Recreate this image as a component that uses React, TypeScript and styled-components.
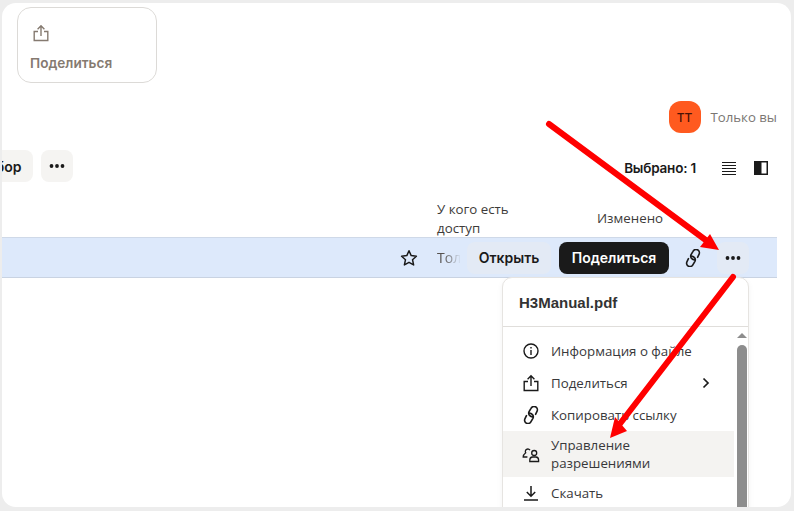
import React from "react";
import styled, { createGlobalStyle } from "styled-components";

const GlobalStyle = createGlobalStyle`
    html, body {
        margin: 0;
        padding: 0;
        background: #ededed;
    }
`;

const Frame = styled.div`
    position: relative;
    box-sizing: border-box;
    width: 794px;
    height: 511px;
    padding: 3px 3px 4px 2px;
    background: #ededed;
    overflow: hidden;
    font-family: "Inter", "Liberation Sans", sans-serif;
    color: #1a1a1a;
`;

const Sheet = styled.div`
    position: relative;
    height: 100%;
    background: #fff;
    border-radius: 14px;
    overflow: hidden;
`;

const ActionCard = styled.div`
    box-sizing: border-box;
    display: flex;
    flex-direction: column;
    width: 140px;
    height: 76px;
    margin: 4px 0 0 15px;
    padding: 16px 12px 0;
    border: 1px solid #dcdad7;
    border-radius: 14px;
    color: #857a70;
`;

const CardIcon = styled.div`
    display: flex;
    margin-left: 2px;
`;

const CardLabel = styled.span`
    margin-top: 13px;
    font-size: 13.6px;
    line-height: 16px;
    font-weight: 600;
`;

const OwnerRow = styled.div`
    display: flex;
    align-items: center;
    justify-content: flex-end;
    gap: 10px;
    height: 32px;
    margin-top: 18px;
    padding-right: 14px;
`;

const Avatar = styled.div`
    display: flex;
    align-items: center;
    justify-content: center;
    width: 32px;
    height: 32px;
    border-radius: 12px;
    background: #ff5a1f;
    color: #4a1206;
    font-size: 12px;
    font-weight: 500;
`;

const OwnerText = styled.span`
    font-family: "Open Sans", "Liberation Sans", sans-serif;
    font-size: 13.2px;
    color: #7a7672;
`;

const Toolbar = styled.div`
    display: flex;
    align-items: center;
    height: 32px;
    margin-top: 17px;
    padding-right: 23px;
`;

const SoftButton = styled.button<{ $dark?: boolean; $w: number; $tint?: string }>`
    display: flex;
    align-items: center;
    justify-content: center;
    flex: none;
    box-sizing: border-box;
    width: ${(p) => p.$w}px;
    height: 32px;
    padding: 0;
    border: none;
    border-radius: 8px;
    background: ${(p) => (p.$dark ? "#1a1a1a" : p.$tint || "#f5f4f2")};
    color: ${(p) => (p.$dark ? "#fff" : "#1a1a1a")};
    font-family: inherit;
    font-size: 14px;
    font-weight: 600;
`;

const ClippedButton = styled(SoftButton)`
    margin-left: -38px;
    margin-right: 8px;
`;

const SelectionGroup = styled.div`
    display: flex;
    align-items: center;
    margin-left: auto;
    padding-top: 4px;
`;

const Selected = styled.span`
    margin-right: 26px;
    font-size: 13.5px;
    font-weight: 600;
    letter-spacing: -0.2px;
`;

const ViewIcons = styled.div`
    display: flex;
    gap: 18px;
`;

const Columns = styled.div`
    box-sizing: border-box;
    display: flex;
    height: 38px;
    margin-top: 17px;
    padding-top: 1px;
    margin-left: 435px;
    font-family: "Open Sans", "Liberation Sans", sans-serif;
    font-size: 13.3px;
    line-height: 19px;
    color: #3d3b39;
`;

const AccessHead = styled.div`
    width: 90px;
    margin-right: 70px;
`;

const ChangedHead = styled.div`
    line-height: 36px;
`;

const FileRow = styled.div`
    box-sizing: border-box;
    display: flex;
    align-items: center;
    width: 775px;
    height: 41px;
    padding-right: 28px;
    background: #dde9fb;
    border-top: 1px solid #cfd9e8;
    border-bottom: 1px solid #c9d3e2;
`;

const StarSlot = styled.div`
    display: flex;
    margin-left: 398px;
    width: 37px;
`;

const Faded = styled.span`
    width: 30px;
    overflow: hidden;
    white-space: nowrap;
    font-family: "Open Sans", "Liberation Sans", sans-serif;
    font-size: 14px;
    color: #55514e;
    mask-image: linear-gradient(to right, #000 20%, transparent 80%);
`;

const ShareButton = styled(SoftButton)`
    margin-left: 8px;
`;

const LinkSlot = styled.div`
    display: flex;
    justify-content: center;
    width: 48px;
`;

const Menu = styled.div`
    position: absolute;
    top: 274px;
    left: 500px;
    width: 247px;
    height: 260px;
    box-sizing: border-box;
    background: #fff;
    border: 1px solid #e6e4e1;
    border-radius: 10px;
    box-shadow: 0 2px 6px rgba(0, 0, 0, 0.05);
`;

const MenuTitle = styled.div`
    box-sizing: border-box;
    height: 49px;
    padding: 15px 16px 0;
    border-bottom: 1px solid #e0dedb;
    font-family: "Liberation Sans", sans-serif;
    font-size: 15px;
    line-height: 20px;
    font-weight: 700;
    color: #333;
`;

const MenuList = styled.div`
    display: flex;
    flex-direction: column;
    width: 231px;
    padding-top: 8px;
`;

const MenuItem = styled.div<{ $active?: boolean }>`
    display: flex;
    align-items: center;
    gap: 11px;
    box-sizing: border-box;
    height: ${(p) => (p.$active ? "46px" : "32px")};
    padding-left: 19px;
    background: ${(p) => (p.$active ? "#f4f3f1" : "transparent")};
    font-family: "Open Sans", "Liberation Sans", sans-serif;
    font-size: 13.3px;
    line-height: 18px;
    color: #38383a;
`;

const ItemLabel = styled.span`
    flex: 1;
`;

const Chevron = styled.svg`
    margin-right: 24px;
`;

const ScrollArrow = styled.div`
    position: absolute;
    top: 55px;
    right: 1px;
    width: 0;
    height: 0;
    border-left: 5px solid transparent;
    border-right: 5px solid transparent;
    border-bottom: 5px solid #8d8d8d;
`;

const ScrollThumb = styled.div`
    position: absolute;
    top: 67px;
    right: 1px;
    width: 10px;
    height: 190px;
    border-radius: 5px 5px 0 0;
    background: #8d8d8d;
`;

const ArrowLayer = styled.svg`
    position: absolute;
    top: 0;
    left: 0;
    pointer-events: none;
`;

const Dots = () => (
    <svg width="16" height="4" viewBox="0 0 16 4" fill="#1a1a1a">
        <circle cx="2.5" cy="2" r="1.9" />
        <circle cx="8" cy="2" r="1.9" />
        <circle cx="13.5" cy="2" r="1.9" />
    </svg>
);

const ShareIcon = ({ color = "#1a1a1a" }: { color?: string }) => (
    <svg width="18" height="18" viewBox="0 0 18 18" fill="none" stroke={color} strokeWidth="1.4">
        <path d="M9 12V2M5.6 5.2 9 1.8l3.4 3.4" />
        <path d="M6 7.5H2.2v9h13.6v-9H12" />
    </svg>
);

const LinkIcon = () => (
    <svg width="18" height="18" viewBox="2 1.5 14 15" fill="none" stroke="#1a1a1a" strokeWidth="1.35" strokeLinecap="round">
        <path d="M10.200 10.600C7.800 10.200 6.400 8.200 7.400 6.200L9 3.400A2.800 2.800 0 0 1 14 6L12.800 8.400" />
        <path d="M7.800 7.400C10.200 7.800 11.600 9.800 10.600 11.800L9 14.600A2.800 2.800 0 0 1 4 12L5.200 9.600" />
    </svg>
);

const InfoIcon = () => (
    <svg width="18" height="18" viewBox="0 0 18 18" fill="none" stroke="#1a1a1a" strokeWidth="1.4">
        <circle cx="9" cy="9" r="7" />
        <path d="M9 8v5M9 5v1.6" />
    </svg>
);

const UsersIcon = () => (
    <svg width="18" height="18" viewBox="0 0 18 18" fill="none" stroke="#1a1a1a" strokeWidth="1.3">
        <path d="M5.400 12H1.200C1.200 10.500 2 9.200 3.700 7.800A2.500 2.500 0 1 1 8 5.200" />
        <circle cx="12.200" cy="8" r="2.500" />
        <path d="M7.800 16.500v-1.500a3 3 0 0 1 2.700-3h3.400a3 3 0 0 1 2.700 3v1.500z" />
    </svg>
);

const DownloadIcon = () => (
    <svg width="18" height="18" viewBox="0 0 18 18" fill="none" stroke="#1a1a1a" strokeWidth="1.5">
        <path d="M9 2v10M4.8 8 9 12.2 13.2 8M2 16h14" />
    </svg>
);

const menuItems = [
    { label: "Информация о файле", icon: <InfoIcon /> },
    { label: "Поделиться", icon: <ShareIcon />, more: true },
    { label: "Копировать ссылку", icon: <LinkIcon /> },
    { label: "Управление разрешениями", icon: <UsersIcon />, active: true },
    { label: "Скачать", icon: <DownloadIcon /> },
];

export default function App() {
    return (
        <Frame>
            <GlobalStyle />
            <Sheet>
                <ActionCard>
                    <CardIcon>
                        <ShareIcon color="#857a70" />
                    </CardIcon>
                    <CardLabel>Поделиться</CardLabel>
                </ActionCard>

                <OwnerRow>
                    <Avatar>ТТ</Avatar>
                    <OwnerText>Только вы</OwnerText>
                </OwnerRow>

                <Toolbar>
                    <ClippedButton $w={69}>Выбор</ClippedButton>
                    <SoftButton $w={32}>
                        <Dots />
                    </SoftButton>
                    <SelectionGroup>
                        <Selected>Выбрано: 1</Selected>
                        <ViewIcons>
                            <svg width="14" height="14" viewBox="0 0 14 14" stroke="#1a1a1a" strokeWidth="1.2">
                                <path d="M0 1.5h14M0 4.5h14M0 7.5h14M0 10.5h14M0 13.5h14" />
                            </svg>
                            <svg width="14" height="14" viewBox="0 0 14 14" fill="none">
                                <rect x="0.75" y="0.75" width="12.5" height="12.5" stroke="#1a1a1a" strokeWidth="1.5" />
                                <rect x="1" y="1" width="6.5" height="12" fill="#1a1a1a" />
                            </svg>
                        </ViewIcons>
                    </SelectionGroup>
                </Toolbar>

                <Columns>
                    <AccessHead>У кого есть доступ</AccessHead>
                    <ChangedHead>Изменено</ChangedHead>
                </Columns>

                <FileRow>
                    <StarSlot>
                        <svg width="18" height="18" viewBox="0 0 18 18" fill="none" stroke="#1a1a1a" strokeWidth="1.5" strokeLinejoin="round">
                            <path d="M9 1.8l2.2 4.8 5.2.6-3.9 3.5 1.1 5.2L9 13.3l-4.6 2.6 1.1-5.2-3.9-3.5 5.2-.6z" />
                        </svg>
                    </StarSlot>
                    <Faded>Тол</Faded>
                    <SoftButton $w={84} $tint="#e3eaf5">Открыть</SoftButton>
                    <ShareButton $w={110} $dark>Поделиться</ShareButton>
                    <LinkSlot>
                        <LinkIcon />
                    </LinkSlot>
                    <SoftButton $w={32} $tint="#e3eaf5">
                        <Dots />
                    </SoftButton>
                </FileRow>

                <Menu>
                    <MenuTitle>H3Manual.pdf</MenuTitle>
                    <MenuList>
                        {menuItems.map((item) => (
                            <MenuItem key={item.label} $active={item.active}>
                                {item.icon}
                                <ItemLabel>
                                    {item.active ? (
                                        <>
                                            Управление
                                            <br />
                                            разрешениями
                                        </>
                                    ) : (
                                        item.label
                                    )}
                                </ItemLabel>
                                {item.more && (
                                    <Chevron width="8" height="12" viewBox="0 0 8 12" fill="none" stroke="#1a1a1a" strokeWidth="1.7">
                                        <path d="M1.5 1.5 6 6l-4.500 4.500" />
                                    </Chevron>
                                )}
                            </MenuItem>
                        ))}
                    </MenuList>
                    <ScrollArrow />
                    <ScrollThumb />
                </Menu>
            </Sheet>

            {/* red annotation arrows drawn over the page */}
            <ArrowLayer width="794" height="511" viewBox="0 0 794 511">
                <path d="M549 124 707 241" stroke="#ff0000" strokeWidth="6" strokeLinecap="round" />
                <polygon points="719,250 700,247 710,234" fill="#ff0000" />
                <path d="M733 277 619 425" stroke="#ff0000" strokeWidth="6" strokeLinecap="round" />
                <polygon points="610,438 615,417 627,431" fill="#ff0000" />
            </ArrowLayer>
        </Frame>
    );
}
